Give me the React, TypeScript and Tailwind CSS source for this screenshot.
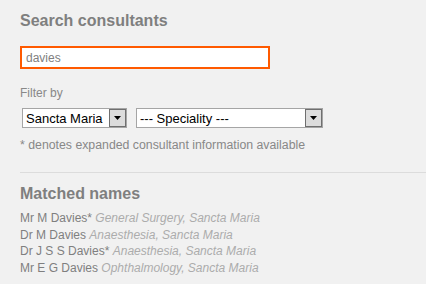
import React from "react";

function Arrow() {
  return (
    <div className="w-[17px] h-[18px] border border-[#6f6f6f] bg-[#dcdcdc] flex items-center justify-center">
      <svg width="7" height="4" viewBox="0 0 7 4"><path d="M0 0h7L3.5 4z" fill="#000" /></svg>
    </div>
  );
}

function Select({ label, width }: { label: string; width: string }) {
  return (
    <div className={`${width} h-[20px] border border-[#a5a5a5] bg-white flex items-center justify-between pl-[3px]`}>
      <span className="text-[13px] text-[#000] leading-none">{label}</span>
      <Arrow />
    </div>
  );
}

export default function App() {
  const rows = [
    { name: "Mr M Davies*", info: "General Surgery, Sancta Maria" },
    { name: "Dr M Davies", info: "Anaesthesia, Sancta Maria" },
    { name: "Dr J S S Davies*", info: "Anaesthesia, Sancta Maria" },
    { name: "Mr E G Davies", info: "Ophthalmology, Sancta Maria" },
  ];
  return (
    <div className="w-[426px] h-[284px] bg-[#f1f1f1] overflow-hidden pl-[20px] pt-[11px]" style={{ fontFamily: '"Liberation Sans", Arial, sans-serif' }}>
      <h1 className="text-[16px] font-bold text-[#7f7f7f] leading-[20px]">Search consultants</h1>
      <div className="mt-[15px] w-[250px] h-[23px] border-2 border-[#ff5a00] bg-white flex items-center pl-[4px]">
        <span className="text-[12px] text-[#808080]">davies</span>
      </div>
      <div className="mt-[17px] text-[12px] text-[#888] leading-[14px]">Filter by</div>
      <div className="mt-[8px] flex gap-[9px] pl-[2px]">
        <Select label="Sancta Maria" width="w-[105px]" />
        <Select label="--- Speciality ---" width="w-[187px]" />
      </div>
      <div className="mt-[10px] text-[12.3px] text-[#888] leading-[14px]">* denotes expanded consultant information available</div>
      <div className="mt-[20px] border-t border-[#dcdcdc]" />
      <h2 className="mt-[11px] text-[16px] font-bold text-[#7f7f7f] leading-[20px]">Matched names</h2>
      <div className="mt-[6px] text-[12px] leading-[16.6px]">
        {rows.map((r) => (
          <div key={r.name}>
            <span className="text-[#7f7f7f]">{r.name}</span>{" "}
            <span className="italic text-[#acacac]">{r.info}</span>
          </div>
        ))}
      </div>
    </div>
  );
}
